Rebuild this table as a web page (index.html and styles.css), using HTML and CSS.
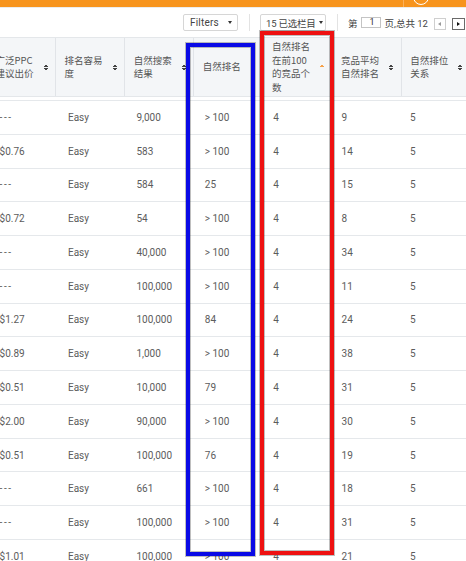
FILE: index.html
```html
<!DOCTYPE html>
<html>
<head>
<meta charset="utf-8">
<link rel="stylesheet" href="styles.css">
</head>
<body>
<div class="topbar"><span class="top-sep"></span><span class="avatar"></span></div>
<div class="toolbar">
  <div class="btn filters">Filters<span class="caret"></span></div>
  <span class="vsep"></span>
  <div class="btn cols"><span class="cols-txt">15 已选栏目</span><span class="caret"></span></div>
  <span class="vsep"></span>
  <span class="pg-txt pg-di">第</span>
  <span class="pg-input">1</span>
  <span class="pg-txt pg-total">页,总共 12</span>
  <span class="pg-btn prev"><span class="tri-l"></span></span>
  <span class="pg-btn next"><span class="tri-r"></span></span>
</div>
<div class="thead">
  <div class="th"><span class="tt">广泛PPC<br>建议出价</span><span class="sort"></span></div>
  <div class="th"><span class="tt">排名容易<br>度</span><span class="sort"></span></div>
  <div class="th"><span class="tt">自然搜索<br>结果</span><span class="sort"></span></div>
  <div class="th"><span class="tt">自然排名</span><span class="sort"></span></div>
  <div class="th"><span class="tt">自然排名<br>在前100<br>的竞品个<br>数</span><span class="sort asc"></span></div>
  <div class="th"><span class="tt">竞品平均<br>自然排名</span><span class="sort"></span></div>
  <div class="th"><span class="tt">自然排位<br>关系</span><span class="sort"></span></div>
</div>
<div class="tgap"></div>
<div class="tbody">
  <div class="tr"><span class="na">---</span><span>Easy</span><span>9,000</span><span>&gt; 100</span><span>4</span><span>9</span><span>5</span></div>
  <div class="tr"><span>$0.76</span><span>Easy</span><span>583</span><span>&gt; 100</span><span>4</span><span>14</span><span>5</span></div>
  <div class="tr"><span class="na">---</span><span>Easy</span><span>584</span><span>25</span><span>4</span><span>15</span><span>5</span></div>
  <div class="tr"><span>$0.72</span><span>Easy</span><span>54</span><span>&gt; 100</span><span>4</span><span>8</span><span>5</span></div>
  <div class="tr"><span class="na">---</span><span>Easy</span><span>40,000</span><span>&gt; 100</span><span>4</span><span>34</span><span>5</span></div>
  <div class="tr"><span class="na">---</span><span>Easy</span><span>100,000</span><span>&gt; 100</span><span>4</span><span>11</span><span>5</span></div>
  <div class="tr"><span>$1.27</span><span>Easy</span><span>100,000</span><span>84</span><span>4</span><span>24</span><span>5</span></div>
  <div class="tr"><span>$0.89</span><span>Easy</span><span>1,000</span><span>&gt; 100</span><span>4</span><span>38</span><span>5</span></div>
  <div class="tr"><span>$0.51</span><span>Easy</span><span>10,000</span><span>79</span><span>4</span><span>31</span><span>5</span></div>
  <div class="tr"><span>$2.00</span><span>Easy</span><span>90,000</span><span>&gt; 100</span><span>4</span><span>30</span><span>5</span></div>
  <div class="tr"><span>$0.51</span><span>Easy</span><span>100,000</span><span>76</span><span>4</span><span>19</span><span>5</span></div>
  <div class="tr"><span class="na">---</span><span>Easy</span><span>661</span><span>&gt; 100</span><span>4</span><span>18</span><span>5</span></div>
  <div class="tr"><span class="na">---</span><span>Easy</span><span>100,000</span><span>&gt; 100</span><span>4</span><span>31</span><span>5</span></div>
  <div class="tr"><span>$1.01</span><span>Easy</span><span>100,000</span><span>&gt; 100</span><span>4</span><span>21</span><span>5</span></div>
</div>
<div class="mark mark-blue"></div>
<div class="mark mark-red"></div>
</body>
</html>
```

FILE: styles.css
```css
html, body {
  margin: 0;
  padding: 0;
  width: 466px;
  height: 561px;
  overflow: hidden;
  background: #fff;
  font-family: Roboto, "Noto Sans CJK SC", sans-serif;
}

.topbar {
  height: 7px;
  background: #f7941d;
  border-bottom: 1px solid #ececec;
  display: flex;
  padding-left: 403px;
  overflow: hidden;
}
.top-sep {
  width: 1px;
  height: 7px;
  background: #fbb05a;
}
.avatar {
  width: 16px;
  height: 16px;
  box-sizing: border-box;
  border: 1.5px solid #fff;
  border-radius: 50%;
  margin-left: 9px;
  margin-top: -11px;
  flex: none;
}

.toolbar {
  height: 29px;
  display: flex;
  align-items: center;
}
.btn {
  height: 17px;
  box-sizing: border-box;
  border: 1px solid #d6d6d6;
  border-radius: 2px;
  display: flex;
  align-items: center;
  font-size: 10px;
  color: #444;
  flex: none;
  white-space: nowrap;
}
.filters {
  margin-left: 183px;
  width: 55px;
  padding-left: 6px;
  letter-spacing: 0.2px;
}
.cols {
  margin-left: 10px;
  width: 66px;
  padding-left: 5px;
}
.cols-txt {
  font-family: Roboto, "Noto Sans CJK SC", sans-serif;
  font-size: 9.5px;
  letter-spacing: -0.2px;
}
.cols .caret {
  margin-left: 3px;
  margin-right: 0;
}
.caret {
  margin-left: auto;
  margin-right: 5px;
  width: 0;
  height: 0;
  flex: none;
  border-left: 2.5px solid transparent;
  border-right: 2.5px solid transparent;
  border-top: 3px solid #333;
}
.vsep {
  width: 1px;
  height: 17px;
  background: #e3e3e3;
  margin-left: 11px;
  flex: none;
}
.pg-txt {
  font-size: 9.5px;
  color: #444;
  flex: none;
  white-space: nowrap;
}
.pg-di {
  margin-left: 10px;
}
.pg-input {
  margin-left: 3px;
  width: 20px;
  height: 11px;
  box-sizing: border-box;
  border: 1px solid #c4c4c4;
  font-size: 9px;
  line-height: 9px;
  color: #333;
  text-align: right;
  padding-right: 5px;
  flex: none;
}
.pg-total {
  margin-left: 4px;
  width: 44px;
}
.pg-btn {
  width: 12px;
  height: 12px;
  box-sizing: border-box;
  border: 1px solid #cfcfcf;
  display: flex;
  align-items: center;
  justify-content: center;
  flex: none;
  margin-top: 2px;
}
.prev {
  margin-left: 5px;
}
.next {
  margin-left: 6px;
  width: 13px;
  border-color: #6a6a6a;
}
.tri-l {
  width: 0;
  height: 0;
  border-top: 2.5px solid transparent;
  border-bottom: 2.5px solid transparent;
  border-right: 3px solid #9a9a9a;
}
.tri-r {
  width: 0;
  height: 0;
  border-top: 2.5px solid transparent;
  border-bottom: 2.5px solid transparent;
  border-left: 3px solid #111;
}

.thead {
  display: grid;
  grid-template-columns: repeat(7, 69.14px);
  margin-left: -13.14px;
  height: 60px;
  box-sizing: border-box;
  background: #f4f6f8;
  border-top: 1px solid #e4e7ea;
  border-bottom: 1px solid #e4e7ea;
}
.th {
  box-sizing: border-box;
  border-right: 1px solid #e1e4e8;
  display: flex;
  align-items: center;
  padding-left: 8.5px;
  padding-right: 7.5px;
}
.tt {
  flex: 1;
  font-family: "Noto Sans CJK SC", sans-serif;
  font-size: 9.5px;
  line-height: 13.5px;
  color: #555;
  white-space: nowrap;
}
.sort {
  width: 4px;
  height: 7px;
  flex: none;
  margin-top: 1px;
  background:
    linear-gradient(to bottom right, transparent 50%, #444 50%) 0 0 / 2px 3px no-repeat,
    linear-gradient(to bottom left, transparent 50%, #444 50%) 2px 0 / 2px 3px no-repeat,
    linear-gradient(to top right, transparent 50%, #444 50%) 0 4px / 2px 3px no-repeat,
    linear-gradient(to top left, transparent 50%, #444 50%) 2px 4px / 2px 3px no-repeat;
}
.sort.asc {
  background:
    linear-gradient(to bottom right, transparent 50%, #f7a24a 50%) 0 0 / 2px 3px no-repeat,
    linear-gradient(to bottom left, transparent 50%, #f7a24a 50%) 2px 0 / 2px 3px no-repeat;
}

.tgap {
  height: 3px;
}

.tbody {
  margin-left: -12.9px;
}
.tr {
  display: grid;
  grid-template-columns: repeat(7, 68.4px);
  height: 33.77px;
  box-sizing: border-box;
  border-top: 1px solid #e5e8eb;
  align-items: center;
}
.tr span {
  padding-left: 12.5px;
  font-size: 10px;
  color: #5c5c5c;
  white-space: nowrap;
}
.tr span.na {
  letter-spacing: 1.6px;
}

.mark {
  position: absolute;
  box-sizing: border-box;
  box-shadow: 0 0 0 1px rgba(0, 0, 0, 0.25), inset 0 0 0 1px rgba(0, 0, 0, 0.25);
}
.mark-blue {
  left: 186px;
  top: 43px;
  width: 69px;
  height: 513px;
  border: 4px solid #0a0ae6;
}
.mark-red {
  left: 259.5px;
  top: 30.5px;
  width: 74px;
  height: 524px;
  border: 4.5px solid #ee1111;
}
```
